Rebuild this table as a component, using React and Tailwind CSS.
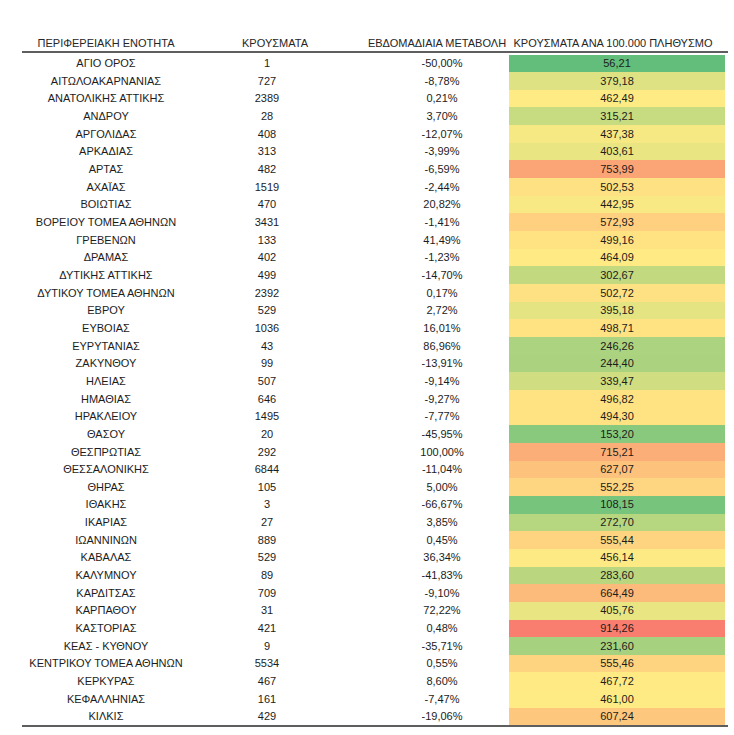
import React from 'react';

const rows = [
    ['ΑΓΙΟ ΟΡΟΣ', '1', '-50,00%', '56,21'],
    ['ΑΙΤΩΛΟΑΚΑΡΝΑΝΙΑΣ', '727', '-8,78%', '379,18'],
    ['ΑΝΑΤΟΛΙΚΗΣ ΑΤΤΙΚΗΣ', '2389', '0,21%', '462,49'],
    ['ΑΝΔΡΟΥ', '28', '3,70%', '315,21'],
    ['ΑΡΓΟΛΙΔΑΣ', '408', '-12,07%', '437,38'],
    ['ΑΡΚΑΔΙΑΣ', '313', '-3,99%', '403,61'],
    ['ΑΡΤΑΣ', '482', '-6,59%', '753,99'],
    ['ΑΧΑΪΑΣ', '1519', '-2,44%', '502,53'],
    ['ΒΟΙΩΤΙΑΣ', '470', '20,82%', '442,95'],
    ['ΒΟΡΕΙΟΥ ΤΟΜΕΑ ΑΘΗΝΩΝ', '3431', '-1,41%', '572,93'],
    ['ΓΡΕΒΕΝΩΝ', '133', '41,49%', '499,16'],
    ['ΔΡΑΜΑΣ', '402', '-1,23%', '464,09'],
    ['ΔΥΤΙΚΗΣ ΑΤΤΙΚΗΣ', '499', '-14,70%', '302,67'],
    ['ΔΥΤΙΚΟΥ ΤΟΜΕΑ ΑΘΗΝΩΝ', '2392', '0,17%', '502,72'],
    ['ΕΒΡΟΥ', '529', '2,72%', '395,18'],
    ['ΕΥΒΟΙΑΣ', '1036', '16,01%', '498,71'],
    ['ΕΥΡΥΤΑΝΙΑΣ', '43', '86,96%', '246,26'],
    ['ΖΑΚΥΝΘΟΥ', '99', '-13,91%', '244,40'],
    ['ΗΛΕΙΑΣ', '507', '-9,14%', '339,47'],
    ['ΗΜΑΘΙΑΣ', '646', '-9,27%', '496,82'],
    ['ΗΡΑΚΛΕΙΟΥ', '1495', '-7,77%', '494,30'],
    ['ΘΑΣΟΥ', '20', '-45,95%', '153,20'],
    ['ΘΕΣΠΡΩΤΙΑΣ', '292', '100,00%', '715,21'],
    ['ΘΕΣΣΑΛΟΝΙΚΗΣ', '6844', '-11,04%', '627,07'],
    ['ΘΗΡΑΣ', '105', '5,00%', '552,25'],
    ['ΙΘΑΚΗΣ', '3', '-66,67%', '108,15'],
    ['ΙΚΑΡΙΑΣ', '27', '3,85%', '272,70'],
    ['ΙΩΑΝΝΙΝΩΝ', '889', '0,45%', '555,44'],
    ['ΚΑΒΑΛΑΣ', '529', '36,34%', '456,14'],
    ['ΚΑΛΥΜΝΟΥ', '89', '-41,83%', '283,60'],
    ['ΚΑΡΔΙΤΣΑΣ', '709', '-9,10%', '664,49'],
    ['ΚΑΡΠΑΘΟΥ', '31', '72,22%', '405,76'],
    ['ΚΑΣΤΟΡΙΑΣ', '421', '0,48%', '914,26'],
    ['ΚΕΑΣ - ΚΥΘΝΟΥ', '9', '-35,71%', '231,60'],
    ['ΚΕΝΤΡΙΚΟΥ ΤΟΜΕΑ ΑΘΗΝΩΝ', '5534', '0,55%', '555,46'],
    ['ΚΕΡΚΥΡΑΣ', '467', '8,60%', '467,72'],
    ['ΚΕΦΑΛΛΗΝΙΑΣ', '161', '-7,47%', '461,00'],
    ['ΚΙΛΚΙΣ', '429', '-19,06%', '607,24'],
];

// excel-style 3 colour scale: green -> yellow -> red
const LOW = [99, 190, 123];
const MID = [255, 235, 132];
const HIGH = [248, 105, 107];
const MIN = 56.21;
const MEDIAN = 462;
const MAX = 1000;

const mix = (a, b, t) => a.map((v, i) => Math.round(v + (b[i] - v) * t));

const scaleColor = (text) => {
    const v = parseFloat(text.replace(',', '.'));
    const c = v <= MEDIAN
        ? mix(LOW, MID, (v - MIN) / (MEDIAN - MIN))
        : mix(MID, HIGH, (v - MEDIAN) / (MAX - MEDIAN));
    return `rgb(${c[0]}, ${c[1]}, ${c[2]})`;
};

const cols = 'grid grid-cols-[168px_160px_159px_216px]';

export default function App() {
    return (
        <div className="bg-white w-[734px] h-[735px] pt-[35px] pl-[22px] text-[11px] text-[#1c1c1c] font-['Liberation_Sans',Arial,sans-serif]">
            <div className="w-[706px]">
                <div className={`${cols} h-[15px] items-center whitespace-nowrap text-[#262626] border-b-2 border-[#5e5e5e] box-content pb-[1px]`}>
                    <div className="text-center">ΠΕΡΙΦΕΡΕΙΑΚΗ ΕΝΟΤΗΤΑ</div>
                    <div className="text-center pl-[10px]">ΚΡΟΥΣΜΑΤΑ</div>
                    <div className="text-center pl-[15px]">ΕΒΔΟΜΑΔΙΑΙΑ ΜΕΤΑΒΟΛΗ</div>
                    <div className="text-center pr-[8px]">ΚΡΟΥΣΜΑΤΑ ΑΝΑ 100.000 ΠΛΗΘΥΣΜΟ</div>
                </div>

                <div className="pt-[1.5px] border-b-2 border-[#5e5e5e]">
                    {rows.map(([name, cases, change, per]) => (
                        <div key={name} className={`${cols} h-[17.66px] items-stretch whitespace-nowrap`}>
                            <div className="flex items-center justify-center">{name}</div>
                            <div className="flex items-center justify-center pr-[6px]">{cases}</div>
                            <div className="flex items-center justify-center pl-[25px]">{change}</div>
                            <div
                                className="flex items-center justify-center"
                                style={{ backgroundColor: scaleColor(per) }}
                            >
                                {per}
                            </div>
                        </div>
                    ))}
                </div>
            </div>
        </div>
    );
}
